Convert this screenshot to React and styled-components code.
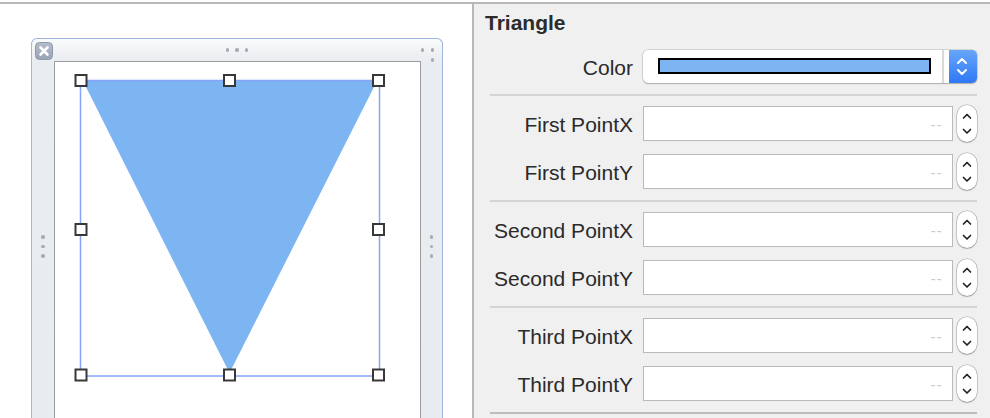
import React from 'react';
import styled, { createGlobalStyle } from 'styled-components';

const GlobalStyle = createGlobalStyle`
  html, body {
    margin: 0;
    padding: 0;
    background: #fff;
  }
  body {
    font-family: "Liberation Sans", Arial, Helvetica, sans-serif;
  }
`;

const ROWS = [
  ['First PointX', 'First PointY'],
  ['Second PointX', 'Second PointY'],
  ['Third PointX', 'Third PointY'],
];

const HANDLES = [
  [81, 80.5], [229.5, 80.5], [378.5, 80.5],
  [81, 229.5], [378.5, 229.5],
  [81, 375], [229.5, 375], [378.5, 375],
];

// ---- page frame
const Page = styled.div`
  width: 990px;
  height: 418px;
  padding-top: 2px;
  box-sizing: border-box;
  background: #fff;
  overflow: hidden;
`;
const Main = styled.div`
  display: flex;
  height: 416px;
  border-top: 2px solid #b8b8b8;
  box-sizing: border-box;
`;

// ---- left: the canvas with the view window
const Canvas = styled.div`
  flex: none;
  width: 474px;
  box-sizing: border-box;
  padding: 34px 0 0 31px;
  background: #fff;
  border-right: 2px solid #b8b8b8;
  overflow: hidden;
`;
const Window = styled.div`
  position: relative;
  width: 412px;
  height: 400px;
  box-sizing: border-box;
  border: 1px solid #a3b4dd;
  border-bottom: none;
  border-radius: 6px 6px 0 0;
  background: linear-gradient(#f9fafb, #e9ecf0 22px, #e8ebef);
  display: grid;
  grid-template-columns: 22px 1fr 21px;
  grid-template-rows: 22px 1fr;
`;
const TitleBar = styled.div`
  grid-column: 1 / -1;
  display: flex;
  align-items: center;
  justify-content: center;
`;
const CloseButton = styled.svg`
  position: absolute;
  top: 3px;
  left: 3px;
`;
const DotRow = styled.div`
  display: flex;
  flex-direction: ${(p) => (p.vertical ? 'column' : 'row')};
  align-items: center;
  gap: 6px;
`;
const Dot = styled.span`
  display: block;
  width: 3.5px;
  height: 3.5px;
  border-radius: 50%;
  background: #a9abae;
`;
const CornerDots = styled.div`
  position: absolute;
  top: 9px;
  right: 8px;
  display: grid;
  grid-template-columns: 3.5px 3.5px;
  gap: 6.5px 6.5px;
`;
const Gutter = styled.div`
  display: flex;
  justify-content: center;
  padding-top: 174px;
`;
const Content = styled.div`
  background: #fff;
  border: 1px solid #9d9d9d;
  border-bottom: none;
  overflow: hidden;
`;

// ---- right: inspector
const Inspector = styled.div`
  flex: 1;
  background: #f0f0f0;
  padding: 7px 13px 0 11px;
  box-sizing: border-box;
  display: flex;
  flex-direction: column;
`;
const Title = styled.div`
  font-size: 21px;
  line-height: 24px;
  font-weight: bold;
  color: #2b2b2b;
`;
const Row = styled.div`
  display: grid;
  grid-template-columns: 143px 1fr;
  column-gap: 10px;
  align-items: center;
  margin-left: 5px;
  margin-top: ${(p) => p.top || 0}px;
`;
const Label = styled.div`
  text-align: right;
  font-size: 21px;
  line-height: 24px;
  color: #2a2a2a;
  white-space: nowrap;
  padding-top: 2px;
`;
const PopupButton = styled.div`
  display: flex;
  height: 33px;
  border-radius: 5px;
  background: #fff;
  overflow: hidden;
  box-shadow: 0 0 0 0.5px rgba(0, 0, 0, 0.22), 0 1px 1.5px rgba(0, 0, 0, 0.2);
`;
const Well = styled.div`
  flex: 1;
  display: flex;
  align-items: center;
  padding: 0 11px 1px 15px;
  border-right: 2px solid #d9d9d9;
`;
const Swatch = styled.div`
  flex: 1;
  height: 16px;
  box-sizing: border-box;
  border: 2px solid #000;
  background: ${(p) => p.color};
`;
const PopupArrows = styled.div`
  width: 28px;
  margin-left: 5px;
  display: flex;
  align-items: center;
  justify-content: center;
  background: linear-gradient(#68a6fa, #2f78f6);
`;
const Section = styled.div`
  margin-top: ${(p) => p.top || 0}px;
  margin-left: 5px;
  border-top: 2px solid #d4d4d4;
  padding: 10px 0 11px;
  display: flex;
  flex-direction: column;
  gap: 13px;
  ${(p) => p.last && 'border-bottom: 2px solid #bdbdbd;'}
`;
const FieldRow = styled(Row)`
  margin-left: 0;
`;
const Control = styled.div`
  display: flex;
  align-items: center;
  gap: 4px;
  height: 35px;
`;
const Field = styled.div`
  flex: 1;
  height: 35px;
  box-sizing: border-box;
  border: 1px solid #bababa;
  background: #fff;
  display: flex;
  align-items: center;
  justify-content: flex-end;
  padding: 3px 9px 0 0;
`;
const Placeholder = styled.span`
  font-size: 14px;
  letter-spacing: 1.5px;
  color: #c8c8c8;
`;
const Stepper = styled.div`
  width: 20px;
  height: 37px;
  margin: -1px 0;
  box-sizing: border-box;
  border-radius: 10px;
  background: #fff;
  box-shadow: 0 0 0 0.5px rgba(0, 0, 0, 0.3), 0 1px 1.5px rgba(0, 0, 0, 0.2);
  display: flex;
`;

const StepperIcon = () => (
  <svg width="20" height="37" viewBox="0 0 20 37">
    <polyline points="6.5,13 10,9.5 13.5,13" fill="none" stroke="#222" strokeWidth="1.7" strokeLinecap="round" strokeLinejoin="round" />
    <polyline points="6.5,24.5 10,28 13.5,24.5" fill="none" stroke="#222" strokeWidth="1.7" strokeLinecap="round" strokeLinejoin="round" />
  </svg>
);

const PopupIcon = () => (
  <svg width="28" height="33" viewBox="0 0 28 33">
    <polyline points="9,13 13,9 17,13" fill="none" stroke="#fff" strokeWidth="2" strokeLinecap="round" strokeLinejoin="round" />
    <polyline points="9,20 13,24 17,20" fill="none" stroke="#fff" strokeWidth="2" strokeLinecap="round" strokeLinejoin="round" />
  </svg>
);

const Dots = ({ n = 3, vertical }) => (
  <DotRow vertical={vertical}>
    {Array.from({ length: n }).map((_, i) => <Dot key={i} />)}
  </DotRow>
);

const Drawing = () => (
  <svg width="365" height="360" viewBox="55 62 365 360" style={{ display: 'block' }}>
    <polygon points="83,81 377,81 229.5,373" fill="#7db5f3" />
    <rect x="80.5" y="80.5" width="299" height="295.5" fill="none" stroke="#87a3fa" strokeWidth="1.5" />
    {HANDLES.map(([x, y], i) => (
      <rect key={i} x={x - 5.5} y={y - 5.5} width="11" height="11" fill="#fff" stroke="#383838" strokeWidth="2" />
    ))}
  </svg>
);

const App = () => {
  return (
    <Page>
      <GlobalStyle />
      <Main>
        <Canvas>
          <Window>
            <CloseButton width="18" height="18" viewBox="0 0 18 18">
              <defs>
                <linearGradient id="cb" x1="0" y1="0" x2="0" y2="1">
                  <stop offset="0" stopColor="#b4bdca" />
                  <stop offset="1" stopColor="#97a3b4" />
                </linearGradient>
              </defs>
              <rect x="0.5" y="0.5" width="17" height="17" rx="4" fill="url(#cb)" stroke="#8e9aab" />
              <path d="M5.5 5.5 L12.5 12.5 M12.5 5.5 L5.5 12.5" stroke="#fff" strokeWidth="2.6" strokeLinecap="round" />
            </CloseButton>
            <TitleBar>
              <Dots />
            </TitleBar>
            <CornerDots>
              <Dot />
              <Dot />
              <span />
              <Dot />
            </CornerDots>
            <Gutter>
              <Dots vertical />
            </Gutter>
            <Content>
              <Drawing />
            </Content>
            <Gutter>
              <Dots vertical />
            </Gutter>
          </Window>
        </Canvas>

        <Inspector>
          <Title>Triangle</Title>
          <Row top={15}>
            <Label>Color</Label>
            <PopupButton>
              <Well>
                <Swatch color="#7db5f3" />
              </Well>
              <PopupArrows>
                <PopupIcon />
              </PopupArrows>
            </PopupButton>
          </Row>
          {ROWS.map((pair, i) => (
            <Section key={i} top={i === 0 ? 11 : 0} last={i === ROWS.length - 1}>
              {pair.map((name) => (
                <FieldRow key={name}>
                  <Label>{name}</Label>
                  <Control>
                    <Field>
                      <Placeholder>--</Placeholder>
                    </Field>
                    <Stepper>
                      <StepperIcon />
                    </Stepper>
                  </Control>
                </FieldRow>
              ))}
            </Section>
          ))}
        </Inspector>
      </Main>
    </Page>
  );
};

export default App;
